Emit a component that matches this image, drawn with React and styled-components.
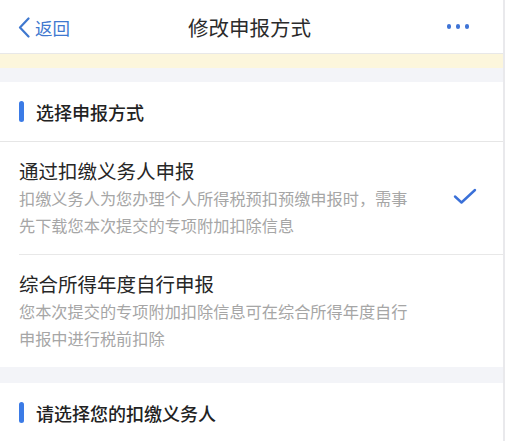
import React from "react";
import styled, { createGlobalStyle } from "styled-components";

const GlobalStyle = createGlobalStyle`
  body {
    margin: 0;
    background: #ffffff;
    font-family: "Noto Sans CJK SC", "Noto Sans", sans-serif;
  }
`;

const Page = styled.div`
  width: 503px;
  height: 441px;
  overflow: hidden;
  border-right: 2px solid #e9e9ec;
  background: #fff;
`;

const NavBar = styled.div`
  height: 53px;
  display: flex;
  align-items: center;
  justify-content: space-between;
  padding: 0 34px 0 18px;
  border-bottom: 1px solid #e8e8e8;
  position: relative;
`;

const Back = styled.div`
  display: flex;
  align-items: center;
  gap: 5px;
  color: #3f78cf;
  font-size: 17.5px;
  margin-top: 1px;
`;

const NavTitle = styled.div`
  position: absolute;
  left: 0;
  right: 4px;
  text-align: center;
  font-size: 20.5px;
  color: #2b2b2b;
  pointer-events: none;
  margin-top: 1px;
`;

const Dots = styled.div`
  display: flex;
  gap: 4.5px;
  span {
    width: 4.5px;
    height: 4.5px;
    border-radius: 50%;
    background: #3f74d6;
  }
`;

const Notice = styled.div`
  height: 14px;
  background: #fcf6dc;
`;

const Gap = styled.div`
  height: ${(p) => p.h}px;
  background: #f3f4f8;
`;

const SectionHead = styled.div`
  height: 59px;
  display: flex;
  align-items: center;
  gap: 12px;
  padding-left: 19px;
  font-size: 18px;
  font-weight: 500;
  color: #222;
  border-bottom: ${(p) => (p.divided ? "1px solid #e6e6e6" : "none")};
  &::before {
    content: "";
    width: 5px;
    height: 21px;
    border-radius: 3px;
    background: #3b7be6;
  }
`;

const Option = styled.div`
  display: flex;
  align-items: center;
  margin-left: 19px;
  padding: 15px 26px 15px 0;
  border-bottom: ${(p) => (p.last ? "none" : "1px solid #e8e8e8")};
`;

const OptionText = styled.div`
  flex: 1;
`;

const OptionTitle = styled.div`
  font-size: 19.5px;
  line-height: 28px;
  color: #262626;
`;

const OptionDesc = styled.div`
  width: 396px;
  font-size: 16.2px;
  line-height: 27px;
  color: #a6a6a6;
`;

const Check = styled.div`
  width: 24px;
  display: flex;
  justify-content: center;
  margin-top: -3px;
`;

const App = () => {
  return (
    <Page>
      <GlobalStyle />
      <NavBar>
        <Back>
          <svg width="12" height="21" viewBox="0 0 12 21">
            <path d="M10.5 1.5 L2 10.5 L10.5 19.5" fill="none" stroke="#3f78cf" strokeWidth="2.2" strokeLinecap="round" strokeLinejoin="round" />
          </svg>
          返回
        </Back>
        <NavTitle>修改申报方式</NavTitle>
        <Dots>
          <span />
          <span />
          <span />
        </Dots>
      </NavBar>
      <Notice />
      <Gap h={14} />
      <SectionHead divided>选择申报方式</SectionHead>
      <Option>
        <OptionText>
          <OptionTitle>通过扣缴义务人申报</OptionTitle>
          <OptionDesc>扣缴义务人为您办理个人所得税预扣预缴申报时，需事先下载您本次提交的专项附加扣除信息</OptionDesc>
        </OptionText>
        <Check>
          <svg width="24" height="17" viewBox="0 0 24 17">
            <path d="M2 8.5 L8.5 14.5 L22 2" fill="none" stroke="#3a70d8" strokeWidth="2.4" strokeLinecap="round" strokeLinejoin="round" />
          </svg>
        </Check>
      </Option>
      <Option last>
        <OptionText>
          <OptionTitle>综合所得年度自行申报</OptionTitle>
          <OptionDesc>您本次提交的专项附加扣除信息可在综合所得年度自行申报中进行税前扣除</OptionDesc>
        </OptionText>
      </Option>
      <Gap h={16} />
      <SectionHead>请选择您的扣缴义务人</SectionHead>
    </Page>
  );
};

export default App;
